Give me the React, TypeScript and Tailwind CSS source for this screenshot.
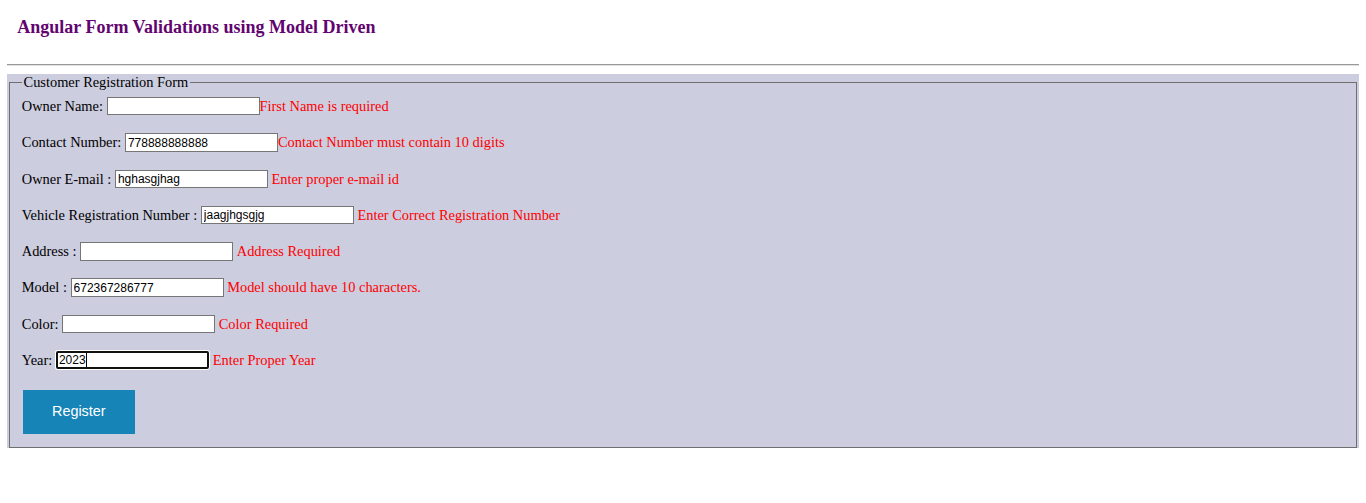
import React from "react";

type Row = {
  label: string;
  value: string;
  error: string;
  spaceBeforeError: boolean;
  focused?: boolean;
};

const rows: Row[] = [
  { label: "Owner Name: ", value: "", error: "First Name is required", spaceBeforeError: false },
  { label: "Contact Number: ", value: "778888888888", error: "Contact Number must contain 10 digits", spaceBeforeError: false },
  { label: "Owner E-mail : ", value: "hghasgjhag", error: "Enter proper e-mail id", spaceBeforeError: true },
  { label: "Vehicle Registration Number : ", value: "jaagjhgsgjg", error: "Enter Correct Registration Number", spaceBeforeError: true },
  { label: "Address : ", value: "", error: "Address Required", spaceBeforeError: true },
  { label: "Model : ", value: "672367286777", error: "Model should have 10 characters.", spaceBeforeError: true },
  { label: "Color: ", value: "", error: "Color Required", spaceBeforeError: true },
  { label: "Year: ", value: "2023", error: "Enter Proper Year", spaceBeforeError: true, focused: true },
];

export default function App() {
  return (
    <div className="min-h-[503px] bg-white px-[7.2px] text-black [font-family:'Liberation_Serif','Times_New_Roman',serif]">
      <div className="pl-[10.1px] pt-[17.2px]">
        <h3 className="text-[18px] font-bold leading-[20px] text-[#62046f] [font-family:'Liberation_Serif','Times_New_Roman',serif]">
          Angular Form Validations using Model Driven
        </h3>
      </div>
      <hr className="mt-[27.1px] h-0 border-0 border-t border-b border-t-[#9a9a9a] border-b-[#e0e0e0]" />
      <div className="mt-[7.6px] bg-[#cccddf]">
        <fieldset className="mx-[1.8px] border border-[#6f6f6f] px-[11.8px] pb-[13px] pt-0">
          <legend className="px-[1.8px] text-[14.4px] leading-[16.6px]">Customer Registration Form</legend>
          <div className="mt-[6.6px] flex flex-col gap-[17.9px]">
            {rows.map((r) => (
              <div key={r.label} className="flex h-[18.4px] items-center text-[14.4px] leading-[16.6px]">
                <span className="whitespace-pre">{r.label}</span>
                {r.focused ? (
                  <div className="flex h-[18px] w-[153.3px] items-center rounded-[2px] border-2 border-[#111] bg-white px-[1px] text-[12px] text-black shadow-[0_0_0_1px_#ffffff] [font-family:'Liberation_Sans',Arial,sans-serif]">
                    <span>{r.value}</span>
                    <span className="ml-[0.5px] h-[14px] w-[1px] bg-black" />
                  </div>
                ) : (
                  <input
                    readOnly
                    value={r.value}
                    className="h-[18.4px] w-[153px] border border-[#767676] bg-white px-[2px] text-[12px] text-black outline-none [font-family:'Liberation_Sans',Arial,sans-serif]"
                  />
                )}
                <span className={"whitespace-pre text-[#ff0000] " + (r.spaceBeforeError ? "ml-[3.6px]" : "")}>
                  {r.error}
                </span>
              </div>
            ))}
          </div>
          <button className="ml-[1px] mt-[20.4px] flex h-[44px] w-[112px] items-center justify-center bg-[#1784b8] text-[14.4px] text-white [font-family:'Liberation_Sans',Arial,sans-serif]">
            Register
          </button>
        </fieldset>
      </div>
    </div>
  );
}
